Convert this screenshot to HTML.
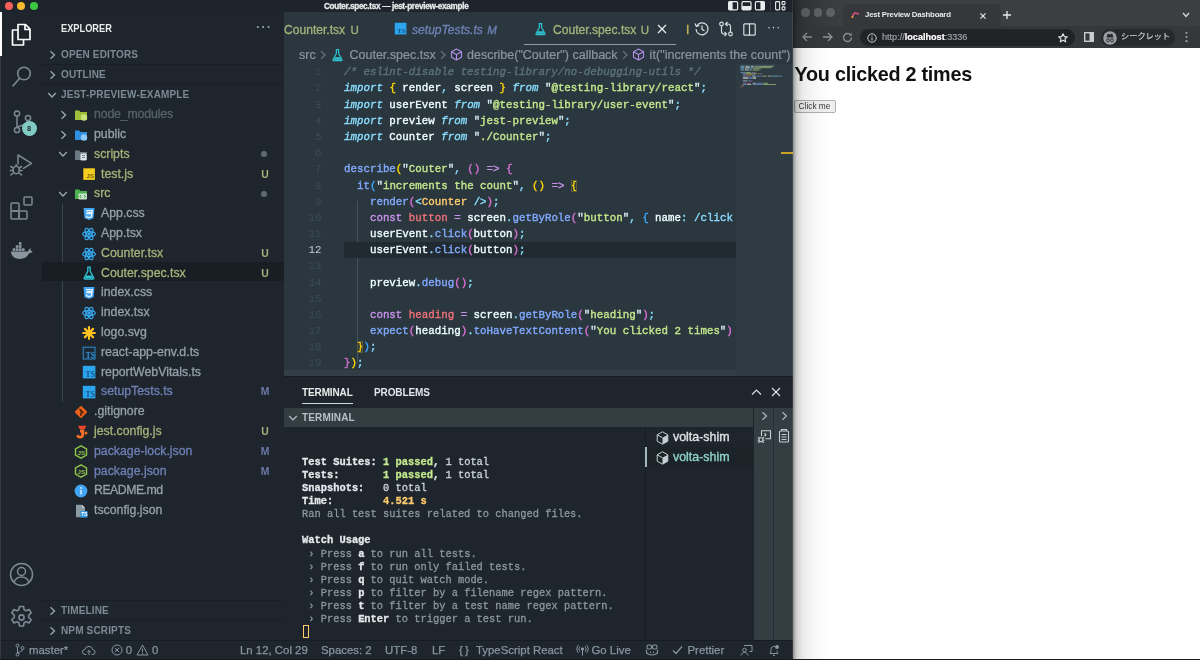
<!DOCTYPE html>
<html lang="en">
<head>
<meta charset="utf-8">
<title>Couter.spec.tsx — jest-preview-example</title>
<style>
*{box-sizing:border-box;margin:0;padding:0}
html,body{width:1200px;height:660px;overflow:hidden;background:#2b373f}
body{position:relative;font-family:"Liberation Sans","Noto Sans CJK JP",sans-serif;font-size:11.7px;color:#aeb9bf}
.abs{position:absolute}
svg{display:block;overflow:visible}
/* ---------- VS Code window ---------- */
#vsc{position:absolute;left:0;top:0;width:793px;height:658.6px;background:#2b373f;overflow:hidden;border-radius:0 0 4px 4px;z-index:2}
#titlebar{position:absolute;left:0;top:0;width:793px;height:13px;background:#1e242b;border-bottom:1px solid #12181c}
#titlebar .title{position:absolute;left:324px;top:1px;-webkit-text-stroke:0.3px currentColor;font-size:8.2px;line-height:12px;color:#e6eaec;font-weight:bold;letter-spacing:-0.32px;white-space:nowrap}
.tl{position:absolute;top:1.9px;width:8.2px;height:8.2px;border-radius:50%;margin-left:.4px}
#activity{position:absolute;left:0;top:12px;width:42px;height:628px;background:#1e252c}
#sidebar{position:absolute;left:42px;top:12px;width:242px;height:628px;background:#1e252c}
#editor{position:absolute;left:284px;top:12px;width:509px;height:364px;background:#2b373f}
#panel{position:absolute;left:284px;top:376px;width:509px;height:264px;background:#1e252c}
#status{position:absolute;left:0;top:640px;width:793px;height:20px;background:#1e252c;color:#8796a0;font-size:11.4px;line-height:18.4px;white-space:nowrap}

/* activity */
#activity .ind{position:absolute;left:0;top:0;width:2px;height:44px;background:#fff}
#activity svg{position:absolute}
.badge{position:absolute;left:21.5px;top:108.5px;width:15px;height:15px;border-radius:50%;background:#80cbc4;color:#1e252c;font-size:7.5px;font-weight:bold;line-height:15px;text-align:center}
/* sidebar */
#sidebar .hdr{position:absolute;left:19px;top:10.3px;font-size:10.4px;line-height:14px;color:#e8eced;font-weight:bold;transform:scaleX(.89);transform-origin:0 50%}
#sidebar .dots{position:absolute;left:214px;top:8px;font-size:13px;line-height:14px;color:#8a979f;letter-spacing:1px;font-weight:bold}
.sec{position:absolute;left:0;width:242px;height:20px;border-top:1px solid rgba(0,0,0,.16);font-size:10px;font-weight:bold;color:#7c8a93;line-height:19px;padding-left:19px;letter-spacing:0.15px;white-space:nowrap}
.sec svg{position:absolute;left:6px;top:4.5px}
.row{position:absolute;left:0;width:242px;height:19.8px;line-height:19.8px;font-size:12.3px;color:#94a1a9;white-space:nowrap}
.row .tw{position:absolute;top:5px}
.row .ic{position:absolute;top:3.3px;width:14px;height:14px;margin-left:-1px}
.row .nm{position:absolute;top:0.5px;-webkit-text-stroke:0.3px currentColor}
.row .st{position:absolute;left:216px;top:0.5px;width:14px;text-align:center;font-size:10.4px;font-weight:bold}
.row .dot{position:absolute;left:219px;top:7px;width:6px;height:6px;border-radius:50%;background:#5d6b6f}
.g{color:#a3b37a}.g .st{color:#a3b37a}
.m{color:#6f80b6}.m .st{color:#6a78a8}
.ign{color:#55636b}
.sel::before{content:"";position:absolute;left:0;top:-1.2px;width:242px;height:19.4px;background:#181e24}
#vsc,#chrome{will-change:transform}
.guide{position:absolute;left:19.5px;top:191.5px;width:1px;height:198px;background:#39464d}

/* editor */
#tabs{position:absolute;left:0;top:0;width:509px;height:33px;background:#2b373f;font-size:12.1px;line-height:33px;white-space:nowrap}
#tabs .t{position:absolute;top:1.5px;height:31.5px;-webkit-text-stroke:0.3px currentColor}
#tabs svg{position:absolute}
#crumbs{position:absolute;left:0;top:33px;width:509px;height:19px;font-size:12.5px;line-height:19px;color:#8a979e;white-space:nowrap}
#crumbs span,#crumbs svg{position:absolute}
#crumbs span{top:0.5px;-webkit-text-stroke:0.2px currentColor}
#code{position:absolute;left:0;top:52px;width:452px;height:312px;overflow:hidden;font-family:"Liberation Mono",monospace;font-size:10.8px;white-space:pre}
.ln{position:absolute;left:0;width:452px;height:16.17px;line-height:16.17px}
.ln .n{position:absolute;left:0;width:37.5px;text-align:right;color:#3b4b54}
.ln .c{position:absolute;left:60px;color:#eeffff;-webkit-text-stroke:0.35px currentColor;width:389px;overflow:hidden;height:16.17px}
.cur{background:#212a30;left:60px !important;width:392px !important}
.cur .n{left:-60px !important;color:#c3cdd2 !important}
.cur .c{left:0 !important}
i.k{color:#89ddff}
.cm{color:#5c727d;font-style:italic}
.y{color:#ffd700}.p{color:#da70d6}.b3{color:#3fa8ff}
.s{color:#c3e88d}.q{color:#d6edf2}.pu{color:#89ddff}
.f{color:#82aaff}.kw{color:#c792ea}.v{color:#f07178}.tg{color:#ffcb6b}
#minimap{position:absolute;left:452px;top:52px;width:57px;height:312px;background:#2e3b43}

/* panel */
#panel{border-top:1px solid #161c20}
#ptabs span{position:absolute;top:9px;font-size:10px;font-weight:bold;line-height:14px;letter-spacing:-0.12px}
#thead{position:absolute;left:0;top:31px;width:469px;height:19px;background:#333d42;font-size:10px;font-weight:bold;color:#b5c0c6;line-height:19px;padding-left:18px;letter-spacing:0.15px}
#term{position:absolute;left:18px;top:78.5px;font-family:"Liberation Mono",monospace;font-size:10.4px;line-height:13.15px;white-space:pre;color:#8a979e;-webkit-text-stroke:0.3px currentColor}
#term b{color:#e4eaec}
#term .lt{color:#cdd5d9}
#term .gr{color:#c3e88d;font-weight:bold}
#term .ye{color:#ffcb6b;font-weight:bold}
#tlist{position:absolute;left:361px;top:50px;width:108px;height:213px;border-left:1px solid #161c20}
#tlist .r{position:absolute;left:0;width:107px;height:20px;line-height:20px;font-size:12.4px;color:#dde3e6;-webkit-text-stroke:0.35px currentColor}
#tlist .r span{position:absolute;left:27px}
#tlist svg{position:absolute;left:10px;top:3.5px}
#pcol1{position:absolute;left:469px;top:31px;width:20px;height:232px;border-left:1px solid #1d252b;background:#333d42}
#pcol2{position:absolute;left:489px;top:31px;width:20px;height:232px;border-left:1px solid #242d33;background:#333d42}
#panel svg{position:absolute}
/* status */
#status{border-top:1px solid #161c20}
#status span,#status svg{position:absolute;top:0}
#status span{-webkit-text-stroke:0.25px currentColor}
/* browser */
#chrome svg{position:absolute}
.ctab{position:absolute;left:50px;top:4px;width:158px;height:22px;background:#36373a;border-radius:6px 6px 0 0}
.ctab .tt{position:absolute;left:22px;top:0;font-size:7.8px;line-height:21px;color:#e8eaed;font-weight:bold;letter-spacing:-0.2px;white-space:nowrap}
.cdot{position:absolute;top:8px;width:8.5px;height:8.5px;border-radius:50%;background:#5f6064}
.url{position:absolute;left:67px;top:3px;width:214.5px;height:16.5px;border-radius:8.25px;background:#222326}
.url .u{position:absolute;left:22px;top:0;-webkit-text-stroke:0.2px currentColor;font-size:9.1px;line-height:16.5px;color:#9aa0a6;white-space:nowrap}
.url .u b{color:#fff}
.inc{position:absolute;left:308px;top:3px;width:74px;height:16.5px;border-radius:8.25px;background:#28292c}
.inc .jp{position:absolute;left:20px;-webkit-text-stroke:0.2px currentColor;top:0;font-size:8.2px;line-height:16.5px;color:#c8cacd;white-space:nowrap}
#cpage h1{position:absolute;left:1.5px;top:62px;margin:0;font-size:19.8px;line-height:24px;font-weight:bold;color:#111;white-space:nowrap;letter-spacing:-0.25px;top:14px}
#cpage .btn{position:absolute;left:0.5px;top:52px;width:42px;height:12.5px;border:1px solid #b0b0b0;border-radius:2px;background:#efefef;font-size:8.3px;line-height:10.5px;color:#333;text-align:center}
#cshadow{position:absolute;left:0;top:0;width:36px;height:660px;background:linear-gradient(to right,rgba(0,0,0,.46) 0,rgba(0,0,0,.28) 2px,rgba(0,0,0,.17) 4.5px,rgba(0,0,0,.09) 9px,rgba(0,0,0,.05) 15px,rgba(0,0,0,.015) 27px,rgba(0,0,0,0) 36px)}
/* ---------- Browser ---------- */
#chrome{position:absolute;left:793px;top:0;width:407px;height:660px;background:#fff;overflow:hidden}
#ctabs{position:absolute;left:0;top:0;width:407px;height:26px;background:linear-gradient(to right,#333437,#3c3e41 52px)}
#ctool{position:absolute;left:0;top:26px;width:407px;height:22px;background:#36373a}
#cpage{position:absolute;left:0;top:48px;width:407px;height:612px;background:#fff}
</style>
</head>
<body>
<div id="vsc">
  <div id="titlebar">
    <div class="tl" style="left:4.2px;background:#f5605a"></div>
    <div class="tl" style="left:16.7px;background:#f6bb2f"></div>
    <div class="tl" style="left:29.2px;background:#3cc840"></div>
    <div class="title">Couter.spec.tsx — jest-preview-example</div>
    <svg class="abs" style="left:728px;top:1px" width="58" height="10" viewBox="0 0 58 10">
      <rect x="0.6" y="0.6" width="9" height="8.3" rx="1.2" fill="none" stroke="#e8eced" stroke-width="1.2"/><rect x="0.6" y="0.6" width="4" height="8.3" fill="#e8eced"/>
      <rect x="14" y="0.6" width="9" height="8.3" rx="1.2" fill="none" stroke="#e8eced" stroke-width="1.2"/><rect x="14" y="5" width="9" height="3.9" fill="#e8eced"/>
      <rect x="27.4" y="0.6" width="9" height="8.3" rx="1.2" fill="none" stroke="#e8eced" stroke-width="1.2"/><rect x="32.4" y="0.6" width="4" height="8.3" fill="#e8eced"/>
      <rect x="42" y="0" width="0.8" height="10" fill="#3a454c"/>
      <rect x="47.6" y="0.6" width="4" height="8.3" rx="0.8" fill="none" stroke="#e8eced" stroke-width="1.1"/><rect x="54" y="0.6" width="3" height="3" rx="0.8" fill="none" stroke="#e8eced" stroke-width="1.1"/><rect x="54" y="5.9" width="3" height="3" rx="0.8" fill="none" stroke="#e8eced" stroke-width="1.1"/>
    </svg>
  </div>
  <div id="activity">
    <div class="ind"></div>
    <svg style="left:10px;top:11px" width="22" height="24" viewBox="0 0 22 24"><path d="M8 1.5h7.5l4.5 4.5v10.5h-12z M15 1.5v5h5" fill="none" stroke="#fff" stroke-width="1.7" stroke-linejoin="round"/><path d="M8 7H2.5v15h11v-5.5" fill="none" stroke="#fff" stroke-width="1.7" stroke-linejoin="round"/></svg>
    <svg style="left:11px;top:53px" width="22" height="24" viewBox="0 0 22 24"><circle cx="13" cy="8.5" r="6.3" fill="none" stroke="#7c8a93" stroke-width="1.6"/><path d="M8.6 13.2L1.5 21.5" stroke="#7c8a93" stroke-width="1.6"/></svg>
    <svg style="left:12px;top:97px" width="22" height="26" viewBox="0 0 22 26"><g fill="none" stroke="#7c8a93" stroke-width="1.5"><circle cx="5" cy="4.5" r="2.6"/><circle cx="5" cy="21" r="2.6"/><circle cx="16" cy="9" r="2.6"/><path d="M5 7.2v11.2M16 11.7c0 4-6 4-10.5 6.6"/></g></svg>
    <div class="badge">8</div>
    <svg style="left:10px;top:141px" width="24" height="24" viewBox="0 0 24 24"><g fill="none" stroke="#7c8a93" stroke-width="1.5" stroke-linejoin="round" stroke-linecap="round"><path d="M8 11V2l13.500 8.300-8 5"/><ellipse cx="6.200" cy="17" rx="3.100" ry="3.700"/><path d="M6.200 13.300v-1.500M.800 13.500l2.500 1.500M11.600 13.500l-2.500 1.500M.300 17.500h2.800M9.300 17.500h2.800M.800 22l2.500-2M11.600 22l-2.500-2"/></g></svg>
    <svg style="left:10px;top:184px" width="24" height="24" viewBox="0 0 24 24"><g fill="none" stroke="#7c8a93" stroke-width="1.5" stroke-linejoin="round"><rect x="1" y="7" width="8" height="8" rx="1"/><rect x="1" y="15" width="8" height="8" rx="1"/><rect x="9" y="15" width="8" height="8" rx="1"/><rect x="14" y="1" width="8" height="8" rx="1"/></g></svg>
    <svg style="left:10px;top:231px" width="23" height="17.7" viewBox="0 0 26 20"><path d="M1 9.500h19.500c.3-1.800 1.300-2.800 2.600-3.500.4.900.3 1.900-.100 2.700 1-.1 2 .1 2.500.6-1 1.900-2.800 2.300-4 2.200C19.500 15.800 16 18 11 18 5 18 1.500 15 1 9.500z" fill="#8a979f"/><g fill="#8a979f"><rect x="3" y="6" width="3" height="3"/><rect x="6.500" y="6" width="3" height="3"/><rect x="10" y="6" width="3" height="3"/><rect x="13.500" y="6" width="3" height="3"/><rect x="6.500" y="2.500" width="3" height="3"/><rect x="10" y="2.500" width="3" height="3"/><rect x="10" y="-1" width="3" height="3"/></g></svg>
    <svg style="left:9px;top:550px" width="25" height="25" viewBox="0 0 25 25"><g fill="none" stroke="#7c8a93" stroke-width="1.5"><circle cx="12.500" cy="12.500" r="11"/><circle cx="12.500" cy="9.500" r="4"/><path d="M5 20.500c1.200-4 4-5.500 7.500-5.500s6.300 1.500 7.500 5.500"/></g></svg>
    <svg style="left:9px;top:593px" width="25" height="25" viewBox="0 0 25 25"><g fill="none" stroke="#7c8a93" stroke-width="1.6" stroke-linejoin="round"><circle cx="12.500" cy="12.500" r="2.600"/><path d="M10.500 1.500h4l.6 3.200 2 1.100 3-1.300 2.100 3.500-2.500 2.100v2.300l2.500 2.100-2.100 3.500-3-1.300-2 1.100-.6 3.200h-4l-.6-3.200-2-1.100-3 1.300-2.100-3.500 2.500-2.100v-2.300L2.800 8l2.100-3.500 3 1.300 2-1.100z"/></g></svg>
  </div>
  <div id="sidebar">
    <div class="hdr">EXPLORER</div><div class="dots">···</div>
    <div class="sec" style="top:32px;border-top-color:transparent"><svg width="9" height="10" viewBox="0 0 9 10"><path d="M2.5 1.2 L6.5 5 L2.5 8.8" fill="none" stroke="#9aa7ae" stroke-width="1.3"/></svg>OPEN EDITORS</div>
    <div class="sec" style="top:52px"><svg width="9" height="10" viewBox="0 0 9 10"><path d="M2.5 1.2 L6.5 5 L2.5 8.8" fill="none" stroke="#9aa7ae" stroke-width="1.3"/></svg>OUTLINE</div>
    <div class="sec" style="top:72px"><svg width="10" height="10" viewBox="0 0 10 10" style="left:5px"><path d="M1.2 3 L5 7 L8.8 3" fill="none" stroke="#9aa7ae" stroke-width="1.3"/></svg>JEST-PREVIEW-EXAMPLE</div>
    <div class="guide"></div>
    <div class="row ign" style="top:92.7px"><svg class="tw" style="left:17.2px" width="9" height="10" viewBox="0 0 9 10"><path d="M2.5 1.2 L6.5 5 L2.5 8.8" fill="none" stroke="#9aa7ae" stroke-width="1.4"/></svg><svg class="ic" style="left:33px" viewBox="0 0 14 14"><path d="M1 2.5h4.2l1.3 1.5H13v8H1z" fill="#9dbf3b"/><circle cx="10" cy="9.5" r="3.2" fill="#c9e27a"/></svg><span class="nm" style="left:52px;letter-spacing:-0.15px">node_modules</span></div>
<div class="row " style="top:112.5px"><svg class="tw" style="left:17.2px" width="9" height="10" viewBox="0 0 9 10"><path d="M2.5 1.2 L6.5 5 L2.5 8.8" fill="none" stroke="#9aa7ae" stroke-width="1.4"/></svg><svg class="ic" style="left:33px" viewBox="0 0 14 14"><path d="M1 2.5h4.2l1.3 1.5H13v8H1z" fill="#2f8fe0"/><circle cx="10" cy="9.5" r="3.2" fill="#8fc7f5"/></svg><span class="nm" style="left:52px">public</span></div>
<div class="row g" style="top:132.3px"><svg class="tw" style="left:16.2px" width="10" height="10" viewBox="0 0 10 10"><path d="M1.2 3 L5 7 L8.8 3" fill="none" stroke="#9aa7ae" stroke-width="1.4"/></svg><svg class="ic" style="left:33px" viewBox="0 0 14 14"><path d="M1 2.5h4.2l1.3 1.5H13v8H1z" fill="#6b7a82"/><rect x="6.5" y="5.5" width="6" height="7" rx="1.2" fill="#dfe6ea"/><path d="M8 7.5h3M8 9.5h3" stroke="#55636b" stroke-width="0.8"/></svg><span class="nm" style="left:52px">scripts</span><span class="dot"></span></div>
<div class="row g" style="top:152.1px"><svg class="ic" style="left:41px" viewBox="0 0 14 14"><rect x="1.3" y="1.3" width="11.6" height="11.6" fill="#f5cd1e"/><text x="4.6" y="11.4" font-family="Liberation Sans,sans-serif" font-size="6" font-weight="bold" fill="#6b5a00">JS</text></svg><span class="nm" style="left:59px">test.js</span><span class="st">U</span></div>
<div class="row g" style="top:171.9px"><svg class="tw" style="left:16.2px" width="10" height="10" viewBox="0 0 10 10"><path d="M1.2 3 L5 7 L8.8 3" fill="none" stroke="#9aa7ae" stroke-width="1.4"/></svg><svg class="ic" style="left:33px" viewBox="0 0 14 14"><path d="M1 2.5h4.2l1.3 1.5H13v8H1z" fill="#4caf50"/><rect x="4.5" y="6.5" width="8.5" height="6" rx="1" fill="#c8e6c9"/><path d="M7.3 8l-1.4 1.5 1.4 1.5M10.2 8l1.4 1.5-1.4 1.5" fill="none" stroke="#2e7d32" stroke-width="0.9"/></svg><span class="nm" style="left:52px">src</span><span class="dot"></span></div>
<div class="row " style="top:191.7px"><svg class="ic" style="left:41px" viewBox="0 0 14 14"><path d="M1.5 1h11l-1 10.2L7 13l-4.5-1.8z" fill="#42a5f5"/><path d="M4 3.6h6.2l-.2 2H4.6M4.4 6.6h5.4l-.3 3.2L7 10.6l-2.4-.8-.1-1.2" fill="none" stroke="#e8f3fd" stroke-width="1.3"/></svg><span class="nm" style="left:59px">App.css</span></div>
<div class="row " style="top:211.5px"><svg class="ic" style="left:41px" viewBox="0 0 14 14"><g fill="none" stroke="#35a8f0" stroke-width="1.25"><ellipse cx="7" cy="7" rx="6.3" ry="2.5"/><ellipse cx="7" cy="7" rx="6.3" ry="2.5" transform="rotate(60 7 7)"/><ellipse cx="7" cy="7" rx="6.3" ry="2.5" transform="rotate(120 7 7)"/></g><circle cx="7" cy="7" r="1.7" fill="#35a8f0"/></svg><span class="nm" style="left:59px">App.tsx</span></div>
<div class="row g" style="top:231.3px"><svg class="ic" style="left:41px" viewBox="0 0 14 14"><g fill="none" stroke="#35a8f0" stroke-width="1.25"><ellipse cx="7" cy="7" rx="6.3" ry="2.5"/><ellipse cx="7" cy="7" rx="6.3" ry="2.5" transform="rotate(60 7 7)"/><ellipse cx="7" cy="7" rx="6.3" ry="2.5" transform="rotate(120 7 7)"/></g><circle cx="7" cy="7" r="1.7" fill="#35a8f0"/></svg><span class="nm" style="left:59px">Counter.tsx</span><span class="st">U</span></div>
<div class="row g sel" style="top:251.1px"><svg class="ic" style="left:41px" viewBox="0 0 14 14"><path d="M5.2 1.2h3.6M5.8 1.4v4L2.2 11.8c-.3.6.1 1.2.8 1.2h8c.7 0 1.1-.6.8-1.2L8.2 5.4v-4" fill="none" stroke="#2fc3d3" stroke-width="1.3" stroke-linejoin="round"/><path d="M4.2 9.5h5.6l1.4 2.6H2.8z" fill="#2fc3d3"/></svg><span class="nm" style="left:59px">Couter.spec.tsx</span><span class="st">U</span></div>
<div class="row " style="top:270.9px"><svg class="ic" style="left:41px" viewBox="0 0 14 14"><path d="M1.5 1h11l-1 10.2L7 13l-4.5-1.8z" fill="#42a5f5"/><path d="M4 3.6h6.2l-.2 2H4.6M4.4 6.6h5.4l-.3 3.2L7 10.6l-2.4-.8-.1-1.2" fill="none" stroke="#e8f3fd" stroke-width="1.3"/></svg><span class="nm" style="left:59px">index.css</span></div>
<div class="row " style="top:290.7px"><svg class="ic" style="left:41px" viewBox="0 0 14 14"><g fill="none" stroke="#35a8f0" stroke-width="1.25"><ellipse cx="7" cy="7" rx="6.3" ry="2.5"/><ellipse cx="7" cy="7" rx="6.3" ry="2.5" transform="rotate(60 7 7)"/><ellipse cx="7" cy="7" rx="6.3" ry="2.5" transform="rotate(120 7 7)"/></g><circle cx="7" cy="7" r="1.7" fill="#35a8f0"/></svg><span class="nm" style="left:59px">index.tsx</span></div>
<div class="row " style="top:310.5px"><svg class="ic" style="left:41px" viewBox="0 0 14 14"><g stroke="#ffc220" stroke-width="2.2" stroke-linecap="round"><path d="M7 1.2v11.6M1.2 7h11.6M2.9 2.9l8.2 8.2M11.1 2.9l-8.2 8.2"/></g></svg><span class="nm" style="left:59px">logo.svg</span></div>
<div class="row " style="top:330.3px"><svg class="ic" style="left:41px" viewBox="0 0 14 14"><rect x="1.2" y="1.2" width="11.8" height="11.8" fill="#1a2a36" stroke="#2f8fd0" stroke-width="1"/><text x="3.8" y="12" font-family="Liberation Serif,serif" font-size="7.4" font-weight="bold" fill="#2f9be6">TS</text></svg><span class="nm" style="left:59px">react-app-env.d.ts</span></div>
<div class="row " style="top:350.1px"><svg class="ic" style="left:41px" viewBox="0 0 14 14"><rect x="0.8" y="0.8" width="12.6" height="12.6" fill="#2aa5ee"/><text x="3.6" y="12.2" font-family="Liberation Serif,serif" font-size="7.6" font-weight="bold" fill="#17527f">TS</text></svg><span class="nm" style="left:59px">reportWebVitals.ts</span></div>
<div class="row m" style="top:369.9px"><svg class="ic" style="left:41px" viewBox="0 0 14 14"><rect x="0.8" y="0.8" width="12.6" height="12.6" fill="#2aa5ee"/><text x="3.6" y="12.2" font-family="Liberation Serif,serif" font-size="7.6" font-weight="bold" fill="#17527f">TS</text></svg><span class="nm" style="left:59px">setupTests.ts</span><span class="st">M</span></div>
<div class="row " style="top:389.7px"><svg class="ic" style="left:33px" viewBox="0 0 14 14"><rect x="2.4" y="2.4" width="9.2" height="9.2" rx="1" transform="rotate(45 7 7)" fill="#e8601c"/><path d="M5.4 4L8.6 7.2M7 5.6v4" stroke="#4a1e08" stroke-width="1.1" fill="none"/><circle cx="7" cy="9.700" r="1" fill="#4a1e08"/><circle cx="8.900" cy="7.500" r="1" fill="#4a1e08"/><circle cx="7" cy="5.600" r="1" fill="#4a1e08"/></svg><span class="nm" style="left:52px">.gitignore</span></div>
<div class="row g" style="top:409.5px"><svg class="ic" style="left:33px" viewBox="0 0 14 14"><path d="M4 0.800h8.500L10.800 4.200H5.700z" fill="#e8452c"/><path d="M6 4.500h4.200v5.300c0 2.400-1.700 3.700-4 3.700-2 0-3.500-1-4-2.800l2.300-1.200c.3.900.8 1.400 1.600 1.400.7 0 1.100-.4 1.100-1.300V7.500H6z" fill="#f2702a"/><circle cx="12" cy="8" r="1.500" fill="#f2702a"/></svg><span class="nm" style="left:52px">jest.config.js</span><span class="st">U</span></div>
<div class="row m" style="top:429.3px"><svg class="ic" style="left:33px" viewBox="0 0 14 14"><path d="M7 0.8l5.5 3.1v6.2L7 13.2l-5.5-3.1V3.9z" fill="none" stroke="#8bc34a" stroke-width="1.5"/><text x="3.5" y="9.6" font-family="Liberation Sans,sans-serif" font-size="6.2" font-weight="bold" fill="#8bc34a">JS</text></svg><span class="nm" style="left:52px">package-lock.json</span><span class="st">M</span></div>
<div class="row m" style="top:449.1px"><svg class="ic" style="left:33px" viewBox="0 0 14 14"><path d="M7 0.8l5.5 3.1v6.2L7 13.2l-5.5-3.1V3.9z" fill="none" stroke="#8bc34a" stroke-width="1.5"/><text x="3.5" y="9.6" font-family="Liberation Sans,sans-serif" font-size="6.2" font-weight="bold" fill="#8bc34a">JS</text></svg><span class="nm" style="left:52px">package.json</span><span class="st">M</span></div>
<div class="row " style="top:468.9px"><svg class="ic" style="left:33px" viewBox="0 0 14 14"><circle cx="7" cy="7" r="6.4" fill="#42a5f5"/><rect x="6.3" y="6" width="1.4" height="4.4" fill="#e3f2fd"/><circle cx="7" cy="4" r="0.9" fill="#e3f2fd"/></svg><span class="nm" style="left:52px;letter-spacing:-0.5px">README.md</span></div>
<div class="row " style="top:488.7px"><svg class="ic" style="left:33px" viewBox="0 0 14 14"><path d="M2 0.8h6l3 3v9.4H2z" fill="#8a9aa3"/><path d="M8 0.8v3h3z" fill="#c5d0d6"/><rect x="6.5" y="7" width="7" height="6.5" fill="#2d96e0"/><text x="7.3" y="12.3" font-family="Liberation Sans,sans-serif" font-size="5" font-weight="bold" fill="#fff">TS</text></svg><span class="nm" style="left:52px">tsconfig.json</span></div>
    <div class="sec" style="top:588px"><svg width="9" height="10" viewBox="0 0 9 10"><path d="M2.5 1.2 L6.5 5 L2.5 8.8" fill="none" stroke="#9aa7ae" stroke-width="1.3"/></svg>TIMELINE</div>
    <div class="sec" style="top:608px"><svg width="9" height="10" viewBox="0 0 9 10"><path d="M2.5 1.2 L6.5 5 L2.5 8.8" fill="none" stroke="#9aa7ae" stroke-width="1.3"/></svg>NPM SCRIPTS</div>
  </div>
  <div id="editor">
    <div id="tabs">
      <span class="t" style="left:0;color:#a3b37a">Counter.tsx <span style="font-size:11.5px;margin-left:2px">U</span></span>
      <svg style="left:110px;top:10px" width="13" height="13" viewBox="0 0 14 14"><rect x="0.8" y="0.8" width="12.6" height="12.6" fill="#2aa5ee"/><text x="3.6" y="12.2" font-family="Liberation Serif,serif" font-size="7.6" font-weight="bold" fill="#17527f">TS</text></svg>
      <span class="t" style="left:128px;color:#6f80b6;font-style:italic">setupTests.ts <span style="font-size:11.5px;margin-left:1px">M</span></span>
      <svg style="left:250px;top:9.5px" width="13" height="14" viewBox="0 0 14 14"><path d="M5.2 1.200h3.600M5.800 1.400v4L2.200 11.800c-.3.600.1 1.200.8 1.200h8c.7 0 1.100-.600.8-1.200L8.200 5.400v-4" fill="none" stroke="#2fc3d3" stroke-width="1.300" stroke-linejoin="round"/><path d="M4.200 9.500h5.600l1.400 2.600H2.800z" fill="#2fc3d3"/></svg>
      <span class="t" style="left:269px;color:#a3b37a">Couter.spec.tsx <span style="font-size:11.5px;margin-left:1px">U</span></span>
      <svg style="left:373px;top:12px" width="10" height="10" viewBox="0 0 10 10"><path d="M1 1l8 8M9 1l-8 8" stroke="#e8eced" stroke-width="1.300"/></svg>
      <div class="abs" style="left:240px;top:31.500px;width:152px;height:1.500px;background:#8c9ba4"></div>
      <span class="t" style="left:402px;color:#c7b75a;width:3px;overflow:hidden">I</span>
      <svg style="left:410px;top:9px" width="16" height="16" viewBox="0 0 16 16"><g fill="none" stroke="#d5dde1" stroke-width="1.200"><path d="M2.600 5.200A6 6 0 1 1 2 8"/><path d="M1 2.500l1.400 3 3-1" stroke-linejoin="round"/><path d="M8 4.500V8.300l2.500 1.500"/></g></svg>
      <svg style="left:434px;top:9px" width="16" height="16" viewBox="0 0 16 16"><g fill="none" stroke="#d5dde1" stroke-width="1.200"><circle cx="3.500" cy="3" r="1.800"/><circle cx="12.500" cy="13" r="1.800"/><path d="M3.500 5v5.500a2.500 2.500 0 0 0 2.500 2.500h2M6.500 11l2 2-2 2M12.500 11V5.500A2.500 2.500 0 0 0 10 3H8M9.500 5l-2-2 2-2"/></g></svg>
      <svg style="left:459px;top:10.5px" width="13" height="13" viewBox="0 0 13 13"><g fill="none" stroke="#d5dde1" stroke-width="1.2"><rect x="0.8" y="0.8" width="11.4" height="11.4" rx="1"/><path d="M6.500 0.800v11.400"/></g></svg>
      <span class="t" style="left:483px;color:#d5dde1;font-size:12px;letter-spacing:0.6px;line-height:26px;-webkit-text-stroke:0">···</span>
    </div>
    <div id="crumbs">
      <span style="left:15px">src</span><svg style="left:35px;top:5px" width="8" height="10" viewBox="0 0 8 10"><path d="M2 1.200L6 5 2 8.800" fill="none" stroke="#6b7a82" stroke-width="1.100"/></svg><svg style="left:47px;top:3px" width="13" height="14" viewBox="0 0 14 14"><path d="M5.2 1.200h3.600M5.800 1.400v4L2.200 11.800c-.3.600.1 1.200.8 1.200h8c.7 0 1.100-.600.8-1.200L8.200 5.400v-4" fill="none" stroke="#2fc3d3" stroke-width="1.300" stroke-linejoin="round"/><path d="M4.200 9.500h5.600l1.400 2.600H2.800z" fill="#2fc3d3"/></svg><span style="left:65.5px">Couter.spec.tsx</span><svg style="left:155px;top:5px" width="8" height="10" viewBox="0 0 8 10"><path d="M2 1.200L6 5 2 8.800" fill="none" stroke="#6b7a82" stroke-width="1.100"/></svg><svg style="left:166px;top:3px" width="13" height="13" viewBox="0 0 13 13"><path d="M6.500 1L11.500 3.700v5.600L6.500 12 1.500 9.300V3.700z M1.500 3.700l5 2.700 5-2.700M6.500 6.400V12" fill="none" stroke="#b08ee6" stroke-width="1.100" stroke-linejoin="round"/></svg><span style="left:183px">describe("Couter") callback</span><svg style="left:337px;top:5px" width="8" height="10" viewBox="0 0 8 10"><path d="M2 1.200L6 5 2 8.800" fill="none" stroke="#6b7a82" stroke-width="1.100"/></svg><svg style="left:348.2px;top:3px" width="13" height="13" viewBox="0 0 13 13"><path d="M6.500 1L11.500 3.700v5.600L6.500 12 1.500 9.300V3.700z M1.500 3.700l5 2.700 5-2.700M6.500 6.400V12" fill="none" stroke="#b08ee6" stroke-width="1.100" stroke-linejoin="round"/></svg><span style="left:365.6px;letter-spacing:0.05px">it("increments the count")</span>
    </div>
    <div id="code">
      <div class="abs" style="left:73.3px;top:137px;width:1px;height:162px;background:#44545c"></div>
      <div class="ln" style="top:0.32px"><span class="n">1</span><span class="c"><span class="cm">/* eslint-disable testing-library/no-debugging-utils */</span></span></div>
<div class="ln" style="top:16.49px"><span class="n">2</span><span class="c"><i class="k">import</i> <span class="y">{</span> render<span class="pu">,</span> screen <span class="y">}</span> <i class="k">from</i> <span class="q">"</span><span class="s">@testing-library/react</span><span class="q">"</span><span class="pu">;</span></span></div>
<div class="ln" style="top:32.66px"><span class="n">3</span><span class="c"><i class="k">import</i> userEvent <i class="k">from</i> <span class="q">"</span><span class="s">@testing-library/user-event</span><span class="q">"</span><span class="pu">;</span></span></div>
<div class="ln" style="top:48.83px"><span class="n">4</span><span class="c"><i class="k">import</i> preview <i class="k">from</i> <span class="q">"</span><span class="s">jest-preview</span><span class="q">"</span><span class="pu">;</span></span></div>
<div class="ln" style="top:65.00px"><span class="n">5</span><span class="c"><i class="k">import</i> Counter <i class="k">from</i> <span class="q">"</span><span class="s">./Counter</span><span class="q">"</span><span class="pu">;</span></span></div>
<div class="ln" style="top:81.17px"><span class="n">6</span><span class="c"></span></div>
<div class="ln" style="top:97.34px"><span class="n">7</span><span class="c"><span class="f">describe</span><span class="y">(</span><span class="q">"</span><span class="s">Couter</span><span class="q">"</span><span class="pu">,</span> <span class="p">()</span> <span class="kw">=&gt;</span> <span class="p">{</span></span></div>
<div class="ln" style="top:113.51px"><span class="n">8</span><span class="c">  <span class="f">it</span><span class="b3">(</span><span class="q">"</span><span class="s">increments the count</span><span class="q">"</span><span class="pu">,</span> <span class="y">()</span> <span class="kw">=&gt;</span> <span class="y" style="outline:1px solid #5f5d3c;outline-offset:-1px">{</span></span></div>
<div class="ln" style="top:129.68px"><span class="n">9</span><span class="c">    <span class="f">render</span><span class="p">(</span><span class="pu">&lt;</span><span class="tg">Counter</span> <span class="pu">/&gt;</span><span class="p">)</span><span class="pu">;</span></span></div>
<div class="ln" style="top:145.85px"><span class="n">10</span><span class="c">    <span class="kw">const</span> <span class="v">button</span> <span class="kw">=</span> screen<span class="pu">.</span><span class="f">getByRole</span><span class="p">(</span><span class="q">"</span><span class="s">button</span><span class="q">"</span><span class="pu">,</span> <span class="b3">{</span> name<span class="pu">:</span> <span class="pu">/click me/i</span> <span class="b3">}</span><span class="p">)</span><span class="pu">;</span></span></div>
<div class="ln" style="top:162.02px"><span class="n">11</span><span class="c">    userEvent<span class="pu">.</span><span class="f">click</span><span class="p">(</span>button<span class="p">)</span><span class="pu">;</span></span></div>
<div class="ln cur" style="top:178.19px"><span class="n">12</span><span class="c">    userEvent<span class="pu">.</span><span class="f">click</span><span class="p">(</span>button<span class="p">)</span><span class="pu">;</span></span></div>
<div class="ln" style="top:194.36px"><span class="n">13</span><span class="c"></span></div>
<div class="ln" style="top:210.53px"><span class="n">14</span><span class="c">    preview<span class="pu">.</span><span class="f">debug</span><span class="p">()</span><span class="pu">;</span></span></div>
<div class="ln" style="top:226.70px"><span class="n">15</span><span class="c"></span></div>
<div class="ln" style="top:242.87px"><span class="n">16</span><span class="c">    <span class="kw">const</span> <span class="v">heading</span> <span class="kw">=</span> screen<span class="pu">.</span><span class="f">getByRole</span><span class="p">(</span><span class="q">"</span><span class="s">heading</span><span class="q">"</span><span class="p">)</span><span class="pu">;</span></span></div>
<div class="ln" style="top:259.04px"><span class="n">17</span><span class="c">    <span class="f">expect</span><span class="p">(</span>heading<span class="p">)</span><span class="pu">.</span><span class="f">toHaveTextContent</span><span class="p">(</span><span class="q">"</span><span class="s">You clicked 2 times</span><span class="q">"</span><span class="p">)</span><span class="pu">;</span></span></div>
<div class="ln" style="top:275.21px"><span class="n">18</span><span class="c">  <span class="y" style="outline:1px solid #5f5d3c;outline-offset:-1px">}</span><span class="b3">)</span><span class="pu">;</span></span></div>
<div class="ln" style="top:291.38px"><span class="n">19</span><span class="c"><span class="p">}</span><span class="y">)</span><span class="pu">;</span></span></div>
    </div>
    <div class="abs" style="left:0;top:358px;width:452px;height:6px;background:rgba(255,255,255,.035)"></div>
    <div id="minimap"><svg width="57" height="40" viewBox="0 0 57 40" opacity="0.55"><rect x="4.5" y="0.8" width="34.2" height="1" fill="#5c727d"/><rect x="4.5" y="2.0" width="3.6" height="1" fill="#89ddff"/><rect x="8.7" y="2.0" width="0.6" height="1" fill="#ffd700"/><rect x="9.9" y="2.0" width="3.6" height="1" fill="#eeffff"/><rect x="14.7" y="2.0" width="3.6" height="1" fill="#eeffff"/><rect x="18.9" y="2.0" width="0.6" height="1" fill="#ffd700"/><rect x="20.1" y="2.0" width="2.4" height="1" fill="#89ddff"/><rect x="23.1" y="2.0" width="14.4" height="1" fill="#c3e88d"/><rect x="4.5" y="3.2" width="3.6" height="1" fill="#89ddff"/><rect x="8.7" y="3.2" width="5.4" height="1" fill="#eeffff"/><rect x="14.7" y="3.2" width="2.4" height="1" fill="#89ddff"/><rect x="17.7" y="3.2" width="18.0" height="1" fill="#c3e88d"/><rect x="4.5" y="4.4" width="3.6" height="1" fill="#89ddff"/><rect x="8.7" y="4.4" width="4.2" height="1" fill="#eeffff"/><rect x="13.5" y="4.4" width="2.4" height="1" fill="#89ddff"/><rect x="16.5" y="4.4" width="8.4" height="1" fill="#c3e88d"/><rect x="4.5" y="5.6" width="3.6" height="1" fill="#89ddff"/><rect x="8.7" y="5.6" width="4.2" height="1" fill="#eeffff"/><rect x="13.5" y="5.6" width="2.4" height="1" fill="#89ddff"/><rect x="16.5" y="5.6" width="6.6" height="1" fill="#c3e88d"/><rect x="4.5" y="8.0" width="4.8" height="1" fill="#82aaff"/><rect x="9.9" y="8.0" width="4.8" height="1" fill="#c3e88d"/><rect x="15.9" y="8.0" width="1.2" height="1" fill="#da70d6"/><rect x="17.7" y="8.0" width="1.2" height="1" fill="#c792ea"/><rect x="19.5" y="8.0" width="0.6" height="1" fill="#da70d6"/><rect x="5.7" y="9.2" width="1.2" height="1" fill="#82aaff"/><rect x="7.5" y="9.2" width="13.2" height="1" fill="#c3e88d"/><rect x="21.9" y="9.2" width="1.2" height="1" fill="#ffd700"/><rect x="23.7" y="9.2" width="1.2" height="1" fill="#c792ea"/><rect x="25.5" y="9.2" width="0.6" height="1" fill="#ffd700"/><rect x="6.9" y="10.4" width="3.6" height="1" fill="#82aaff"/><rect x="11.1" y="10.4" width="4.8" height="1" fill="#ffcb6b"/><rect x="16.5" y="10.4" width="2.4" height="1" fill="#89ddff"/><rect x="6.9" y="11.6" width="3.0" height="1" fill="#c792ea"/><rect x="10.5" y="11.6" width="3.6" height="1" fill="#f07178"/><rect x="15.9" y="11.6" width="3.6" height="1" fill="#eeffff"/><rect x="20.1" y="11.6" width="5.4" height="1" fill="#82aaff"/><rect x="26.1" y="11.6" width="4.8" height="1" fill="#c3e88d"/><rect x="32.1" y="11.6" width="3.6" height="1" fill="#eeffff"/><rect x="36.3" y="11.6" width="6.6" height="1" fill="#89ddff"/><rect x="43.5" y="11.6" width="2.4" height="1" fill="#89ddff"/><rect x="6.9" y="12.8" width="5.4" height="1" fill="#eeffff"/><rect x="12.9" y="12.8" width="3.0" height="1" fill="#82aaff"/><rect x="16.5" y="12.8" width="3.6" height="1" fill="#eeffff"/><rect x="6.9" y="14.0" width="5.4" height="1" fill="#eeffff"/><rect x="12.9" y="14.0" width="3.0" height="1" fill="#82aaff"/><rect x="16.5" y="14.0" width="3.6" height="1" fill="#eeffff"/><rect x="6.9" y="16.4" width="4.2" height="1" fill="#eeffff"/><rect x="11.7" y="16.4" width="3.0" height="1" fill="#82aaff"/><rect x="14.7" y="16.4" width="1.8" height="1" fill="#da70d6"/><rect x="6.9" y="18.8" width="3.0" height="1" fill="#c792ea"/><rect x="10.5" y="18.8" width="4.2" height="1" fill="#f07178"/><rect x="16.5" y="18.8" width="3.6" height="1" fill="#eeffff"/><rect x="20.7" y="18.8" width="5.4" height="1" fill="#82aaff"/><rect x="26.7" y="18.8" width="5.4" height="1" fill="#c3e88d"/><rect x="6.9" y="20.0" width="3.6" height="1" fill="#82aaff"/><rect x="11.1" y="20.0" width="4.2" height="1" fill="#eeffff"/><rect x="16.5" y="20.0" width="10.2" height="1" fill="#82aaff"/><rect x="27.3" y="20.0" width="12.6" height="1" fill="#c3e88d"/><rect x="5.7" y="21.2" width="1.8" height="1" fill="#ffd700"/><rect x="4.5" y="22.4" width="1.8" height="1" fill="#da70d6"/></svg><div class="abs" style="left:45px;top:88px;width:12px;height:1.5px;background:#c9a227"></div></div>
  </div>
  <div id="panel">
    <div id="ptabs"><span style="left:18px;color:#e8eced">TERMINAL</span><span style="left:90px;color:#dfe5e8">PROBLEMS</span>
      <div class="abs" style="left:18px;top:26px;width:51px;height:1px;background:#cfd8dc"></div></div>
    <svg style="left:466.5px;top:11px" width="11" height="8" viewBox="0 0 11 8"><path d="M1 6.500l4.500-4.500 4.500 4.500" fill="none" stroke="#d5dde1" stroke-width="1.200"/></svg>
    <svg style="left:486.5px;top:10px" width="10" height="10" viewBox="0 0 10 10"><path d="M1 1l8 8M9 1l-8 8" stroke="#d5dde1" stroke-width="1.200"/></svg>
    <div id="thead">TERMINAL</div>
    <svg style="left:4px;top:36px" width="10" height="10" viewBox="0 0 10 10"><path d="M1.200 3 L5 7 L8.800 3" fill="none" stroke="#b5c0c6" stroke-width="1.200"/></svg>
    <div id="term"><b>Test Suites: </b><span class="gr">1 passed</span><b>, </b><span class="lt">1 total</span>
<b>Tests:       </b><span class="gr">1 passed</span><b>, </b><span class="lt">1 total</span>
<b>Snapshots:   </b><span class="lt">0 total</span>
<b>Time:</b>        <span class="ye">4.521 s</span>
Ran all test suites related to changed files.

<b>Watch Usage</b>
 › Press <b>a</b> to run all tests.
 › Press <b>f</b> to run only failed tests.
 › Press <b>q</b> to quit watch mode.
 › Press <b>p</b> to filter by a filename regex pattern.
 › Press <b>t</b> to filter by a test name regex pattern.
 › Press <b>Enter</b> to trigger a test run.</div>
    <div class="abs" style="left:18.5px;top:248px;width:6px;height:13px;border:1px solid #ffcb6b"></div>
    <div id="tlist">
      <div class="r" style="top:0"><svg width="13" height="14" viewBox="0 0 13 14"><path d="M6.500 0.800l5.300 3v6.400l-5.300 3-5.300-3V3.800z" fill="none" stroke="#c5ced3" stroke-width="1"/><path d="M6.500 6.800l5.300-3v6.400l-5.300 3z" fill="#c5ced3"/><path d="M1.200 3.800l5.300 3" fill="none" stroke="#c5ced3" stroke-width="1"/></svg><span>volta-shim</span></div>
      <div class="r" style="top:20px;color:#8fd3cc;background:#1b2228"><svg width="13" height="14" viewBox="0 0 13 14"><path d="M6.500 0.800l5.300 3v6.400l-5.300 3-5.300-3V3.800z" fill="none" stroke="#c5ced3" stroke-width="1"/><path d="M6.500 6.800l5.300-3v6.400l-5.300 3z" fill="#c5ced3"/><path d="M1.200 3.800l5.300 3" fill="none" stroke="#c5ced3" stroke-width="1"/></svg><span>volta-shim</span><div class="abs" style="left:-1px;top:0;width:1.5px;height:20px;background:#a3b8bb"></div></div>
    </div>
    <div id="pcol1"><svg style="left:5.5px;top:3px" width="9" height="10" viewBox="0 0 9 10"><path d="M2.500 1.200 L6.500 5 L2.500 8.800" fill="none" stroke="#aeb9bf" stroke-width="1.200"/></svg>
      <svg style="left:3px;top:20.5px" width="15" height="14.5" viewBox="0 0 15 14"><g fill="none" stroke="#c5ced3" stroke-width="1.100"><path d="M4.500 7V1.500h9v8H8.500"/><path d="M7.500 4l1.500 1.500L7.500 7"/><circle cx="4" cy="10.500" r="2"/><path d="M1 8l1.300 1M7 8l-1.300 1M.500 11h1.500M6 11h1.500M1.200 13.500l1.200-1.200M6.800 13.500l-1.200-1.200"/></g></svg></div>
    <div id="pcol2"><svg style="left:5.5px;top:3px" width="9" height="10" viewBox="0 0 9 10"><path d="M2.500 1.200 L6.500 5 L2.500 8.800" fill="none" stroke="#aeb9bf" stroke-width="1.200"/></svg>
      <svg style="left:4px;top:20.5px" width="12" height="14" viewBox="0 0 12 14"><g fill="none" stroke="#c5ced3" stroke-width="1.100"><rect x="1.500" y="2" width="9" height="11" rx="1"/><path d="M3.500 2V.500h5V2M3.500 5.500h5M3.500 8h5M3.500 10.500h5"/></g></svg></div>
  </div>
  <div id="status">
    <svg style="left:14.5px;top:2.2px" width="10" height="14" viewBox="0 0 10 14"><g fill="none" stroke="#8796a0" stroke-width="1"><circle cx="2.500" cy="2.500" r="1.500"/><circle cx="2.500" cy="11.500" r="1.500"/><circle cx="7.500" cy="5" r="1.500"/><path d="M2.500 4v6M7.500 6.500c0 2.500-4 2-5 4"/></g></svg>
    <span style="left:29px">master*</span>
    <svg style="left:82px;top:4.2px" width="14" height="11" viewBox="0 0 14 11"><g fill="none" stroke="#8796a0" stroke-width="1"><path d="M4.500 9.500H3.300a2.600 2.600 0 0 1-.3-5.200 4 4 0 0 1 7.800.4 2.400 2.400 0 0 1-.3 4.800H9.500"/><path d="M7 10V5.500M5.200 7.200L7 5.400l1.800 1.800"/></g></svg>
    <svg style="left:111px;top:3.2px" width="12" height="12" viewBox="0 0 12 12"><g fill="none" stroke="#8796a0" stroke-width="1"><circle cx="6" cy="6" r="5"/><path d="M4 4l4 4M8 4l-4 4"/></g></svg>
    <span style="left:125.8px">0</span>
    <svg style="left:136px;top:3.2px" width="13" height="12" viewBox="0 0 13 12"><g fill="none" stroke="#8796a0" stroke-width="1" stroke-linejoin="round"><path d="M6.500 1L12 11H1z"/><path d="M6.500 4.500v3.500M6.500 9v1"/></g></svg>
    <span style="left:152px">0</span>
    <span style="left:240px">Ln 12, Col 29</span>
    <span style="left:321px">Spaces: 2</span>
    <span style="left:385px">UTF-8</span>
    <span style="left:432px">LF</span>
    <span style="left:459px">{&thinsp;}</span>
    <span style="left:476px">TypeScript React</span>
    <svg style="left:577px;top:3.2px" width="11" height="12" viewBox="0 0 11 12"><g fill="none" stroke="#8796a0" stroke-width="1"><circle cx="5.500" cy="5" r="1.200" fill="#8796a0"/><path d="M3 7.500a3.500 3.500 0 0 1 0-5M8 7.500a3.500 3.500 0 0 0 0-5M1.500 9a5.600 5.600 0 0 1 0-8M9.500 9a5.600 5.600 0 0 0 0-8M5.500 6v5.500"/></g></svg>
    <span style="left:591.5px">Go Live</span>
    <svg style="left:645px;top:3.2px" width="14" height="12" viewBox="0 0 14 12"><g fill="none" stroke="#8796a0" stroke-width="1.100"><rect x="2" y="1" width="4.500" height="4" rx="1.500"/><rect x="7.500" y="1" width="4.500" height="4" rx="1.500"/><path d="M1.500 5.500v3.500c1.500 1.500 3.500 2 5.500 2s4-.5 5.500-2V5.500"/><path d="M5.500 7.500v1.500M8.500 7.500v1.500"/></g></svg>
    <svg style="left:672px;top:4.2px" width="11" height="10" viewBox="0 0 11 10"><path d="M1 5.500l3 3L10 1.500" fill="none" stroke="#8796a0" stroke-width="1.200"/></svg>
    <span style="left:687.5px">Prettier</span>
    <svg style="left:739.5px;top:3.2px" width="13" height="12" viewBox="0 0 13 12"><g fill="none" stroke="#8796a0" stroke-width="1"><path d="M4 1.500h8v6H9.500"/><circle cx="4.500" cy="6" r="1.800"/><path d="M1 11.500c.3-2 1.800-3 3.500-3s3.200 1 3.500 3"/></g></svg>
    <svg style="left:768px;top:3.2px" width="12" height="13" viewBox="0 0 12 13"><g fill="none" stroke="#8796a0" stroke-width="1"><path d="M2 9.500c1-1 1-2 1-4a3 3 0 0 1 4-3M9 6.500c0 1.500.3 2.200 1 3H2M5 11a1.200 1.200 0 0 0 2 0"/></g><circle cx="9" cy="3" r="2" fill="#8796a0"/></svg>
  </div>
  <div class="abs" style="left:0;top:13px;width:1px;height:646px;background:rgba(255,255,255,.10)"></div>
  <div class="abs" style="left:792px;top:0;width:1px;height:659px;background:rgba(255,255,255,.09)"></div>
</div>
<div id="chrome">
  <div id="ctabs">
    <div class="cdot" style="left:8px"></div><div class="cdot" style="left:20.7px"></div><div class="cdot" style="left:33.4px"></div>
    <div class="ctab">
      <svg style="left:8px;top:7px" width="9" height="8" viewBox="0 0 9 8"><path d="M1 6.500c1-3 2-4.500 3.500-4.500S6 4 8 2.500" fill="none" stroke="#e8537a" stroke-width="1.400"/><circle cx="1.500" cy="6" r="1" fill="#f4a340"/></svg>
      <div class="tt">Jest Preview Dashboard</div>
      <svg style="left:136.5px;top:8.5px" width="6" height="6" viewBox="0 0 7 7"><path d="M.500.500l6 6M6.500.500l-6 6" stroke="#e8eaed" stroke-width="1.300"/></svg>
    </div>
    <svg style="left:209.5px;top:11px" width="8" height="8" viewBox="0 0 9 9"><path d="M4.500 0v9M0 4.500h9" stroke="#e8eaed" stroke-width="1.500"/></svg>
    <svg style="left:389px;top:12px" width="8" height="6" viewBox="0 0 8 6"><path d="M1 1l3 3.500L7 1" fill="none" stroke="#d5d7da" stroke-width="1.400"/></svg>
  </div>
  <div id="ctool">
    <svg style="left:9px;top:6px" width="11" height="10" viewBox="0 0 11 10"><path d="M10 5H1.500M5 1L1 5l4 4" fill="none" stroke="#8f9195" stroke-width="1.300"/></svg><svg style="left:28.5px;top:6px" width="11" height="10" viewBox="0 0 11 10"><path d="M1 5h8.500M6 1l4 4-4 4" fill="none" stroke="#8f9195" stroke-width="1.300"/></svg>
    <svg style="left:49px;top:5.500px" width="11" height="11" viewBox="0 0 11 11"><path d="M9.500 5.500a4 4 0 1 1-1.200-2.900" fill="none" stroke="#8f9195" stroke-width="1.300"/><path d="M9.800.800v3h-3z" fill="#8f9195"/></svg>
    <div class="url">
      <svg style="left:7px;top:3.500px" width="10" height="10" viewBox="0 0 10 10"><circle cx="5" cy="5" r="4.200" fill="none" stroke="#c8cacd" stroke-width="1"/><path d="M5 4.500v3M5 2.500v1" stroke="#c8cacd" stroke-width="1.100"/></svg>
      <div class="u">http://<b>localhost</b>:3336</div>
      <svg style="left:198px;top:3.500px" width="10" height="10" viewBox="0 0 10 10"><path d="M5 .800l1.300 2.800 3 .3-2.300 2 .7 3L5 7.300 2.300 8.900l.7-3-2.300-2 3-.3z" fill="none" stroke="#e8eaed" stroke-width="1.100" stroke-linejoin="round"/></svg>
    </div>
    <svg style="left:291px;top:6px" width="10" height="10" viewBox="0 0 10 10"><rect x=".700" y=".700" width="8.600" height="8.600" fill="none" stroke="#c8cacd" stroke-width="1.400"/><rect x="5.500" y=".700" width="3.800" height="8.600" fill="#c8cacd"/></svg>
    <div class="inc">
      <svg style="left:1.5px;top:1.5px" width="14" height="14" viewBox="0 0 14 14"><circle cx="7" cy="7" r="6.800" fill="#9aa0a6"/><path d="M3.500 6.500h7l-1-3.200c-.2-.6-.7-.6-1.200-.4L7 3.400l-1.300-.5c-.5-.2-1-.2-1.200.4z" fill="#28292c"/><circle cx="5" cy="9.300" r="1.500" fill="none" stroke="#28292c" stroke-width=".900"/><circle cx="9" cy="9.300" r="1.500" fill="none" stroke="#28292c" stroke-width=".900"/></svg>
      <div class="jp">シークレット</div>
    </div>
    <svg style="left:392px;top:5px" width="3" height="12" viewBox="0 0 3 12"><g fill="#9aa0a6"><circle cx="1.500" cy="1.800" r="1.100"/><circle cx="1.500" cy="6" r="1.100"/><circle cx="1.500" cy="10.200" r="1.100"/></g></svg>
  </div>
  <div id="cpage">
    <h1>You clicked 2 times</h1>
    <div class="btn">Click me</div>
  </div>
  <div id="cshadow"></div>
</div>
<div class="abs" style="left:0;top:658.6px;width:1200px;height:2px;background:#17191c"></div>
</body>
</html>
